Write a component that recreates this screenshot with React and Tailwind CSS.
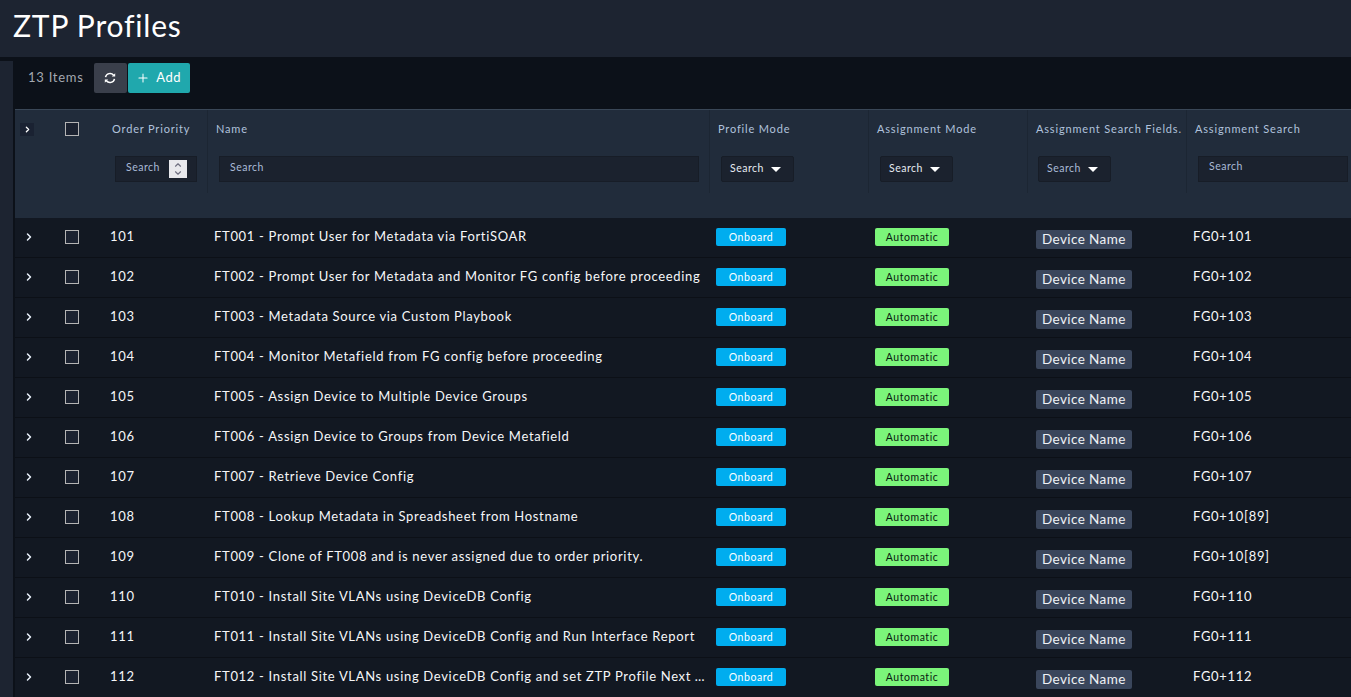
import React from 'react';
import { ChevronRight, ChevronUp, ChevronDown, Plus } from 'lucide-react';

const GRID = 'grid grid-cols-[35px_50px_107px_502px_159px_159px_159px_1fr]';

const rows = [
  ['101', 'FT001 - Prompt User for Metadata via FortiSOAR', 'FG0+101'],
  ['102', 'FT002 - Prompt User for Metadata and Monitor FG config before proceeding', 'FG0+102'],
  ['103', 'FT003 - Metadata Source via Custom Playbook', 'FG0+103'],
  ['104', 'FT004 - Monitor Metafield from FG config before proceeding', 'FG0+104'],
  ['105', 'FT005 - Assign Device to Multiple Device Groups', 'FG0+105'],
  ['106', 'FT006 - Assign Device to Groups from Device Metafield', 'FG0+106'],
  ['107', 'FT007 - Retrieve Device Config', 'FG0+107'],
  ['108', 'FT008 - Lookup Metadata in Spreadsheet from Hostname', 'FG0+10[89]'],
  ['109', 'FT009 - Clone of FT008 and is never assigned due to order priority.', 'FG0+10[89]'],
  ['110', 'FT010 - Install Site VLANs using DeviceDB Config', 'FG0+110'],
  ['111', 'FT011 - Install Site VLANs using DeviceDB Config and Run Interface Report', 'FG0+111'],
  ['112', 'FT012 - Install Site VLANs using DeviceDB Config and set ZTP Profile Next Action', 'FG0+112'],
];

const Checkbox = () => (
  <div className="w-[14px] h-[14px] border border-[#b4b4b4] bg-[#1b2230]" />
);

const HeaderLabel = ({ children, className = '' }) => (
  <div className={`h-[38px] flex items-center text-[11px] tracking-[0.83px] text-[#b0c2dc] whitespace-nowrap ${className}`}>
    {children}
  </div>
);

const SelectFilter = ({ muted }) => (
  <div className={`mt-[8px] w-[73px] h-[26px] flex items-center justify-between pl-[8px] pr-[12px] bg-[#1b222e] border border-[#171d27] rounded-[2px] text-[10.5px] tracking-[0.5px] ${muted ? 'text-[#a9bbd6]' : 'text-[#e6ebf2]'}`}>
    Search
    <span className="w-0 h-0 border-x-[5px] border-x-transparent border-t-[5px] border-t-white" />
  </div>
);

const RefreshIcon = () => (
  <svg width="12" height="12" viewBox="0 0 12 12" fill="none" stroke="currentColor" strokeWidth="1.5">
    <path d="M1.5 5.2A4.6 4.6 0 0 1 9.6 3.2" />
    <path d="M10.5 6.8A4.6 4.6 0 0 1 2.4 8.8" />
    <path d="M7.8 4.6h3.4V1.2z" fill="currentColor" stroke="none" />
    <path d="M4.2 7.4H0.8v3.4z" fill="currentColor" stroke="none" />
  </svg>
);

const Row = ({ priority, name, search }) => (
  <div className={`${GRID} h-[40px] items-center border-b border-[#0c1017] bg-[#121822] text-[13px] tracking-[0.68px] text-[#f6f7f9]`}>
    <div className="pl-[8px] -mt-[2px] text-[#e8f0fa]">
      <ChevronRight size={12} strokeWidth={3} />
    </div>
    <div className="pl-[15px] -mt-[2px]"><Checkbox /></div>
    <div className="pl-[10px] -mt-[2px]">{priority}</div>
    <div className="pl-[7px] pr-[2px] -mt-[2px] truncate">{name}</div>
    <div className="pl-[7px] -mt-[1px]">
      <span className="w-[70px] h-[18px] pt-[1px] flex items-center justify-center rounded-[2px] bg-[#00adef] text-[10.5px] tracking-[0.55px] text-white">Onboard</span>
    </div>
    <div className="pl-[7px] -mt-[1px]">
      <span className="w-[74px] h-[18px] pt-[1px] flex items-center justify-center rounded-[2px] bg-[#7bf57a] text-[10.5px] tracking-[0.55px] text-[#0a1a12]">Automatic</span>
    </div>
    <div className="pl-[9px] mt-[5px]">
      <span className="inline-flex items-center h-[19px] px-[6px] rounded-[2px] bg-[#3a465c] text-[13.5px] tracking-[0.4px] text-[#eef1f5] whitespace-nowrap">Device Name</span>
    </div>
    <div className="pl-[7px] -mt-[2px]">{search}</div>
  </div>
);

export default function App() {
  return (
    <div className="h-[697px] overflow-hidden bg-[#0c1119] font-['Lato','Noto_Sans',sans-serif]">
      <header className="h-[57px] bg-[#1d2431] flex items-center pl-[13px] pb-[7px] text-[30px] tracking-[0.8px] text-white">
        ZTP Profiles
      </header>
      <div className="flex mt-[4px]">
        <aside className="w-[13px] shrink-0 h-[640px] bg-[#1d2431]" />
        <main className="flex-1 min-w-0 pl-[2px] -mt-[4px]">
          <div className="h-[52px] flex items-start pt-[6px] pl-[13px]">
            <span className="h-[30px] flex items-center text-[13px] tracking-[0.75px] text-[#a3a8b0] mr-[10px]">13 Items</span>
            <button className="w-[33px] h-[30px] flex items-center justify-center bg-[#3a3f4b] rounded-[2px] text-white mr-px">
              <RefreshIcon />
            </button>
            <button className="w-[62px] h-[30px] flex items-center justify-center gap-[6px] bg-[#20a8ad] rounded-[2px] text-[13px] tracking-[0.5px] text-white">
              <Plus size={14} strokeWidth={1.75} />
              Add
            </button>
          </div>

          <div className={`${GRID} h-[109px] bg-[#212c3b] border-t border-[#3a4757]`}>
            <div className="pl-[5px] pt-[13px]">
              <span className="w-[14px] h-[13px] flex items-center justify-center bg-[#1a2232] text-white">
                <ChevronRight size={9} strokeWidth={3.5} />
              </span>
            </div>
            <div className="pl-[15px] pt-[12px]"><Checkbox /></div>
            <div className="h-[83px] w-[108px] border-r border-[#1c2633] pl-[12px]">
              <HeaderLabel>Order Priority</HeaderLabel>
              <div className="mt-[8px] ml-[3px] w-[82px] h-[26px] flex items-center justify-between pl-[10px] pr-[9px] bg-[#1b222e] border border-[#171d27] text-[10.5px] tracking-[0.5px] text-[#a9bbd6]">
                <span className="-mt-[2px]">Search</span>
                <span className="w-[18px] h-[18px] flex flex-col items-center justify-center bg-[#e8e8ec] text-[#6f6f80]">
                  <ChevronUp size={10} strokeWidth={2.75} className="-mb-[1px]" />
                  <ChevronDown size={10} strokeWidth={2.75} className="-mt-[1px]" />
                </span>
              </div>
            </div>
            <div className="h-[83px] w-[503px] border-r border-[#1c2633] pl-[9px] pr-[10px]">
              <HeaderLabel>Name</HeaderLabel>
              <div className="mt-[8px] ml-[3px] h-[26px] flex items-center pb-[2px] pl-[10px] bg-[#1b222e] border border-[#171d27] text-[10.5px] tracking-[0.5px] text-[#a9bbd6]">
                Search
              </div>
            </div>
            <div className="h-[83px] w-[160px] border-r border-[#1c2633] pl-[9px]">
              <HeaderLabel>Profile Mode</HeaderLabel>
              <div className="ml-[3px]"><SelectFilter /></div>
            </div>
            <div className="h-[83px] w-[160px] border-r border-[#1c2633] pl-[9px]">
              <HeaderLabel>Assignment Mode</HeaderLabel>
              <div className="ml-[3px]"><SelectFilter /></div>
            </div>
            <div className="h-[83px] w-[160px] border-r border-[#1c2633] pl-[9px]">
              <HeaderLabel>Assignment Search Fields.</HeaderLabel>
              <div className="ml-[2px]"><SelectFilter muted /></div>
            </div>
            <div className="h-[83px] pl-[9px] pr-[3px]">
              <HeaderLabel>Assignment Search</HeaderLabel>
              <div className="mt-[8px] ml-[3px] h-[26px] flex items-start pt-[2px] pl-[10px] bg-[#1b222e] border border-[#171d27] text-[10.5px] tracking-[0.5px] text-[#a9bbd6]">
                Search
              </div>
            </div>
          </div>

          {rows.map(([priority, name, search]) => (
            <Row key={priority} priority={priority} name={name} search={search} />
          ))}
        </main>
      </div>
    </div>
  );
}
